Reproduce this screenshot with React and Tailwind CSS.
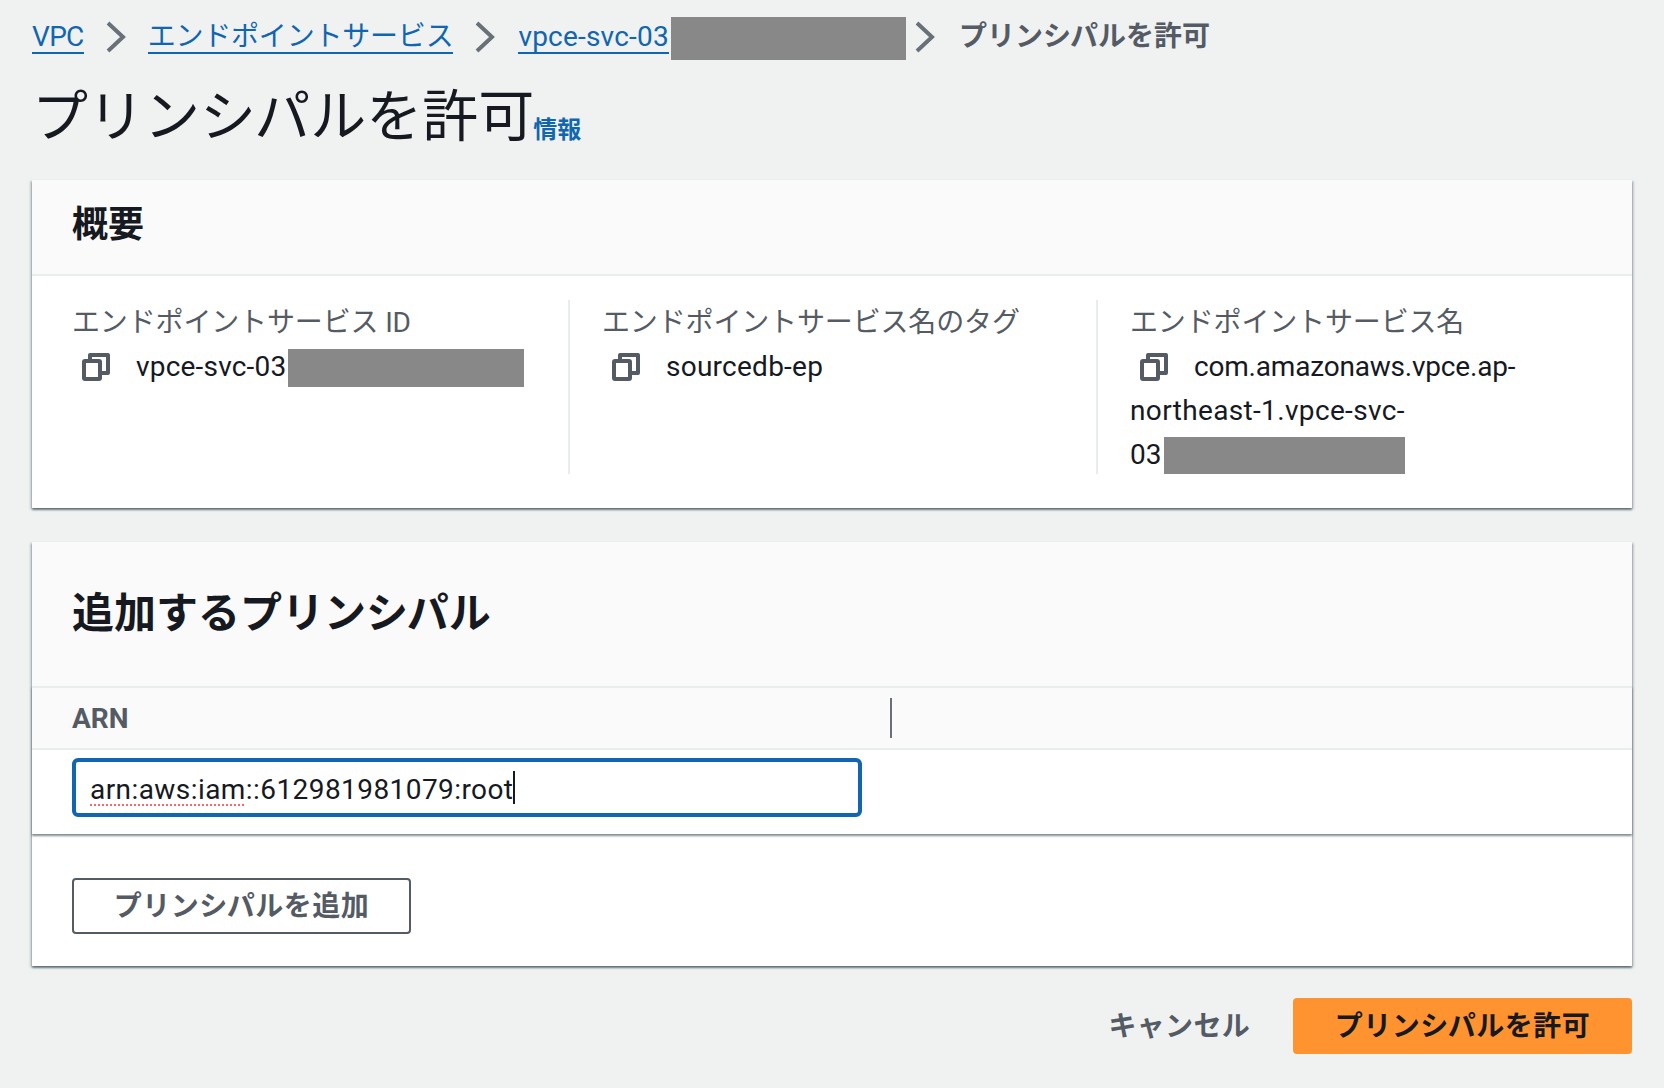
const cardShadow = 'shadow-[0_2px_2px_0_rgba(0,28,36,0.5),2px_1px_2px_0_rgba(0,28,36,0.15),-2px_1px_2px_0_rgba(0,28,36,0.15)]'

function Chevron() {
  return (
    <svg width="20" height="32" viewBox="0 0 20 32" className="shrink-0" fill="none">
      <path d="M2 2 L17 16 L2 30" stroke="#687078" strokeWidth="4" />
    </svg>
  )
}

function CopyIcon({ className }) {
  return (
    <svg width="28" height="28" viewBox="0 0 28 28" className={className} fill="none" stroke="#545b64" strokeWidth="4" strokeLinejoin="round">
      <rect x="2" y="8" width="16" height="18" rx="1" />
      <path d="M8 7.5 V2 H26 V20 H18.5" />
    </svg>
  )
}

function Redacted({ className }) {
  return <span className={`inline-block bg-[#888888] align-middle ${className}`} />
}

function Crumb({ children, className }) {
  return (
    <a className={`block h-[38px] leading-[42px] border-b-2 border-[#1066b0] text-[#1066b0] ${className || ''}`}>{children}</a>
  )
}

function SummaryColumn({ label, children, className }) {
  return (
    <div className={className}>
      <div className="h-[42px] leading-[46px] tracking-[-0.15px] text-[#545b64]">{label}</div>
      <div className="mt-[3px] leading-[44px] text-[#16191f]">
        {children}
      </div>
    </div>
  )
}

export default function App() {
  return (
    <div className="min-h-screen bg-[#f0f2f2] px-8 text-[28px] font-['Roboto','Noto_Sans_CJK_JP',sans-serif]">
      {/* breadcrumbs */}
      <nav className="flex items-start h-[60px] pt-[16px]">
        <Crumb className="tracking-[-0.7px]">VPC</Crumb>
        <span className="ml-[22px] mr-[22px] mt-[5px]"><Chevron /></span>
        <Crumb className="tracking-[-0.2px]">エンドポイントサービス</Crumb>
        <span className="ml-[22px] mr-[23px] mt-[5px]"><Chevron /></span>
        <div className="flex">
          <Crumb className="tracking-[0.2px]">vpce-svc-03</Crumb>
          <Redacted className="w-[235px] h-[43px] ml-[2px] mt-[1px]" />
        </div>
        <span className="ml-[9px] mr-[24px] mt-[5px]"><Chevron /></span>
        <span className="leading-[42px] font-bold text-[#545b64]">プリンシパルを許可</span>
      </nav>

      {/* title */}
      <div className="flex items-end h-[90px] pb-[1px]">
        <h1 className="text-[56px] leading-[64px] font-normal text-[#16191f]">プリンシパルを許可</h1>
        <a className="-ml-[1px] mb-[4px] text-[24px] leading-[30px] font-bold text-[#1066b0]">情報</a>
      </div>

      {/* summary */}
      <section className={`mt-[30px] bg-white ${cardShadow}`}>
        <div className="h-[96px] px-10 bg-[#fafafa] border-b-2 border-[#eaeded] flex items-center pb-[5px]">
          <h2 className="text-[36px] font-bold text-[#16191f]">概要</h2>
        </div>
        <div className="px-10 pt-6 pb-[34px]">
          <div className="grid grid-cols-[496px_528px_1fr] grid-rows-[174px] h-[174px]">
            <SummaryColumn label="エンドポイントサービス ID">
              <span className="whitespace-nowrap">
                <CopyIcon className="inline-block ml-[10px] mr-[26px] align-[-5px]" />
                <span className="tracking-[0.2px]">vpce-svc-03</span>
                <Redacted className="w-[236px] h-[38px] -mt-[2px] ml-[2px]" />
              </span>
            </SummaryColumn>
            <SummaryColumn label="エンドポイントサービス名のタグ" className="border-l-2 border-[#eaeded] pl-[32px]">
              <CopyIcon className="inline-block ml-[10px] mr-[26px] align-[-5px]" />
              <span className="tracking-[0.25px]">sourcedb-ep</span>
            </SummaryColumn>
            <SummaryColumn label="エンドポイントサービス名" className="border-l-2 border-[#eaeded] pl-[32px]">
              <CopyIcon className="inline-block ml-[10px] mr-[26px] align-[-5px]" />
              <span className="tracking-[-0.2px]">com.amazonaws.vpce.ap-</span>
              <span className="tracking-[0.35px]">northeast-1.vpce-svc-</span>
              <span className="whitespace-nowrap">
                03<Redacted className="w-[241px] h-[37px] ml-[3px] -mt-[2px]" />
              </span>
            </SummaryColumn>
          </div>
        </div>
      </section>

      {/* principals */}
      <section className={`mt-[34px] bg-white ${cardShadow}`}>
        <div className="h-[144px] px-10 bg-[#fafafa] flex items-center pb-[1px]">
          <h2 className="text-[42px] font-bold text-[#16191f]">追加するプリンシパル</h2>
        </div>
        <div className="relative shadow-[0_2px_2px_0_rgba(0,28,36,0.5)]">
          <div className="h-[64px] px-10 bg-[#fafafa] border-y-2 border-[#eaeded] flex items-center relative">
            <span className="font-bold text-[#545b64] pt-[2px]">ARN</span>
            <span className="absolute left-[858px] top-[10px] h-[40px] w-[2px] bg-[#687078]" />
          </div>
          <div className="h-[84px] px-10 pt-[8px]">
            <div className="w-[790px] h-[59px] border-4 border-[#1066b0] rounded-[6px] pl-[14px] flex items-center text-[#16191f] leading-[40px] tracking-[0.43px]">
              <span className="mt-[4px] underline decoration-dotted decoration-[#f66] decoration-2 underline-offset-[6px]">arn:aws:iam</span>
              <span className="mt-[4px]">::612981981079:root</span>
              <span className="w-[2px] h-[33px] bg-[#16191f]" />
            </div>
          </div>
        </div>
        <div className="h-[132px] px-10 pt-[44px]">
          <button className="w-[339px] h-[56px] pt-[2px] border-2 border-[#545b64] rounded-[4px] font-bold tracking-[0.5px] text-[#545b64]">プリンシパルを追加</button>
        </div>
      </section>

      {/* actions */}
      <div className="mt-[32px] flex items-center justify-end">
        <button className="pt-[2px] font-bold tracking-[0.3px] text-[#545b64] mr-[43px]">キャンセル</button>
        <button className="w-[339px] h-[56px] pt-[2px] rounded-[4px] bg-[#ff9330] font-bold tracking-[0.5px] text-[#16191f]">プリンシパルを許可</button>
      </div>
    </div>
  )
}
